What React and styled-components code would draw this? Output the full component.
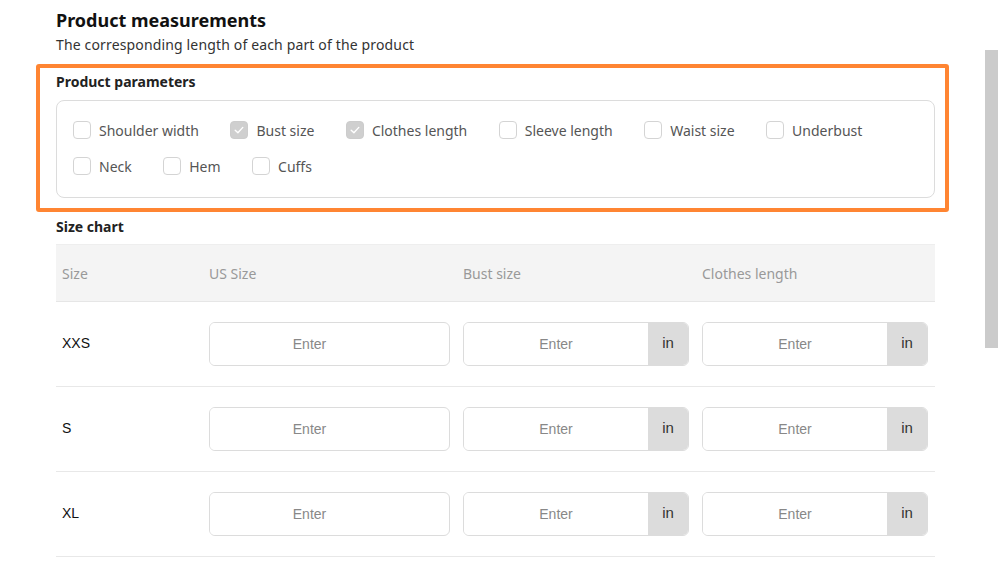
import React from "react"
import styled, { createGlobalStyle } from "styled-components"

const GlobalStyle = createGlobalStyle`
  body {
    margin: 0;
    background: #fff;
    font-family: "Noto Sans", "Liberation Sans", sans-serif;
    color: #333;
  }
`

const Page = styled.div`
  width: 1000px;
  height: 570px;
  overflow: hidden;
  box-sizing: border-box;
  padding: 8px 0 0 36px;
`

const Title = styled.h2`
  margin: 0 0 0 20px;
  font-size: 18px;
  font-weight: 700;
  line-height: 24px;
  color: #111;
`

const Subtitle = styled.p`
  margin: 3px 0 0 20px;
  font-size: 14px;
  line-height: 20px;
  letter-spacing: 0.15px;
  color: #333;
`

const Highlight = styled.section`
  width: 913px;
  box-sizing: border-box;
  margin-top: 9px;
  border: 4px solid #ff8532;
  border-radius: 3px;
  padding: 4px 10px 10px 16px;
`

const Label = styled.h3`
  margin: 0;
  font-size: 14px;
  font-weight: 700;
  line-height: 20px;
  color: #222;
`

const ParamCard = styled.div`
  margin-top: 8px;
  border: 1px solid #dcdcdc;
  border-radius: 8px;
  padding: 19px 16px 21px;
  display: flex;
  flex-wrap: wrap;
  row-gap: 16px;
  column-gap: 31.5px;
  width: 879px;
  box-sizing: border-box;
`

const Check = styled.label`
  display: flex;
  align-items: center;
  gap: 8px;
  height: 20px;
  font-size: 14px;
  color: #555;
`

const Box = styled.span`
  width: 18px;
  height: 18px;
  box-sizing: border-box;
  border-radius: 4px;
  border: 1px solid ${p => (p.$on ? "#ccc" : "#d4d4d4")};
  background: ${p => (p.$on ? "#cfcfcf" : "#fff")};
  display: flex;
  align-items: center;
  justify-content: center;
`

const Chart = styled.section`
  margin: 5px 0 0 20px;
  width: 879px;
`

const Grid = styled.div`
  display: grid;
  grid-template-columns: 147px 254px 239px 239px;
  margin-top: 7px;
`

const HeadCell = styled.div`
  background: #f4f4f4;
  height: 58px;
  display: flex;
  align-items: center;
  padding: 0 6px;
  font-size: 14px;
  color: #999;
  border-top: 1px solid #eee;
  border-bottom: 1px solid #e6e6e6;
  box-sizing: border-box;
`

const Cell = styled.div`
  height: 85px;
  box-sizing: border-box;
  border-bottom: 1px solid #e8e8e8;
  display: flex;
  align-items: center;
  padding: 0 7px 0 6px;
`

const SizeName = styled.span`
  font-family: "Liberation Sans", Arial, sans-serif;
  font-size: 14px;
  color: #111;
  margin-top: -3px;
`

const Field = styled.div`
  flex: 1;
  height: 44px;
  display: flex;
  border: 1px solid #dcdcdc;
  border-radius: 6px;
  overflow: hidden;
  box-sizing: border-box;
  font-family: "Liberation Sans", Arial, sans-serif;
  font-size: 14px;
  padding-right: ${p => (p.$plain ? "40px" : "0")};
`

const Input = styled.input`
  flex: 1;
  min-width: 0;
  border: 0;
  outline: none;
  text-align: center;
  font: inherit;
  color: #333;
  padding: 0;
  &::placeholder {
    color: #888;
  }
`

const Unit = styled.span`
  width: 40px;
  background: #dcdcdc;
  display: flex;
  align-items: center;
  justify-content: center;
  color: #333;
  font-size: 15px;
  padding-bottom: 3px;
  box-sizing: border-box;
`

const ScrollThumb = styled.div`
  position: fixed;
  left: 985px;
  top: 50px;
  width: 13px;
  height: 298px;
  background: #cbcbcb;
`

const params = [
  ["Shoulder width", false],
  ["Bust size", true],
  ["Clothes length", true],
  ["Sleeve length", false],
  ["Waist size", false],
  ["Underbust", false],
  ["Neck", false],
  ["Hem", false],
  ["Cuffs", false],
]

const sizes = ["XXS", "S", "XL"]

const Tick = () => (
  <svg width="12" height="12" viewBox="0 0 12 12" fill="none">
    <path d="M2.2 6.2 L4.9 8.8 L9.8 3.4" stroke="#fff" strokeWidth="1.4" strokeLinecap="round" strokeLinejoin="round" />
  </svg>
)

const App = () => {
  return (
    <Page>
      <GlobalStyle />
      <Title>Product measurements</Title>
      <Subtitle>The corresponding length of each part of the product</Subtitle>
      <Highlight>
        <Label>Product parameters</Label>
        <ParamCard>
          {params.map(([name, on]) => (
            <Check key={name}>
              <Box $on={on}>{on && <Tick />}</Box>
              {name}
            </Check>
          ))}
        </ParamCard>
      </Highlight>
      <Chart>
        <Label>Size chart</Label>
        <Grid>
          <HeadCell>Size</HeadCell>
          <HeadCell>US Size</HeadCell>
          <HeadCell>Bust size</HeadCell>
          <HeadCell>Clothes length</HeadCell>
          {sizes.map(s => (
            <React.Fragment key={s}>
              <Cell><SizeName>{s}</SizeName></Cell>
              <Cell>
                <Field $plain><Input placeholder="Enter" /></Field>
              </Cell>
              <Cell>
                <Field><Input placeholder="Enter" /><Unit>in</Unit></Field>
              </Cell>
              <Cell>
                <Field><Input placeholder="Enter" /><Unit>in</Unit></Field>
              </Cell>
            </React.Fragment>
          ))}
        </Grid>
      </Chart>
      <ScrollThumb />
    </Page>
  )
}

export default App
